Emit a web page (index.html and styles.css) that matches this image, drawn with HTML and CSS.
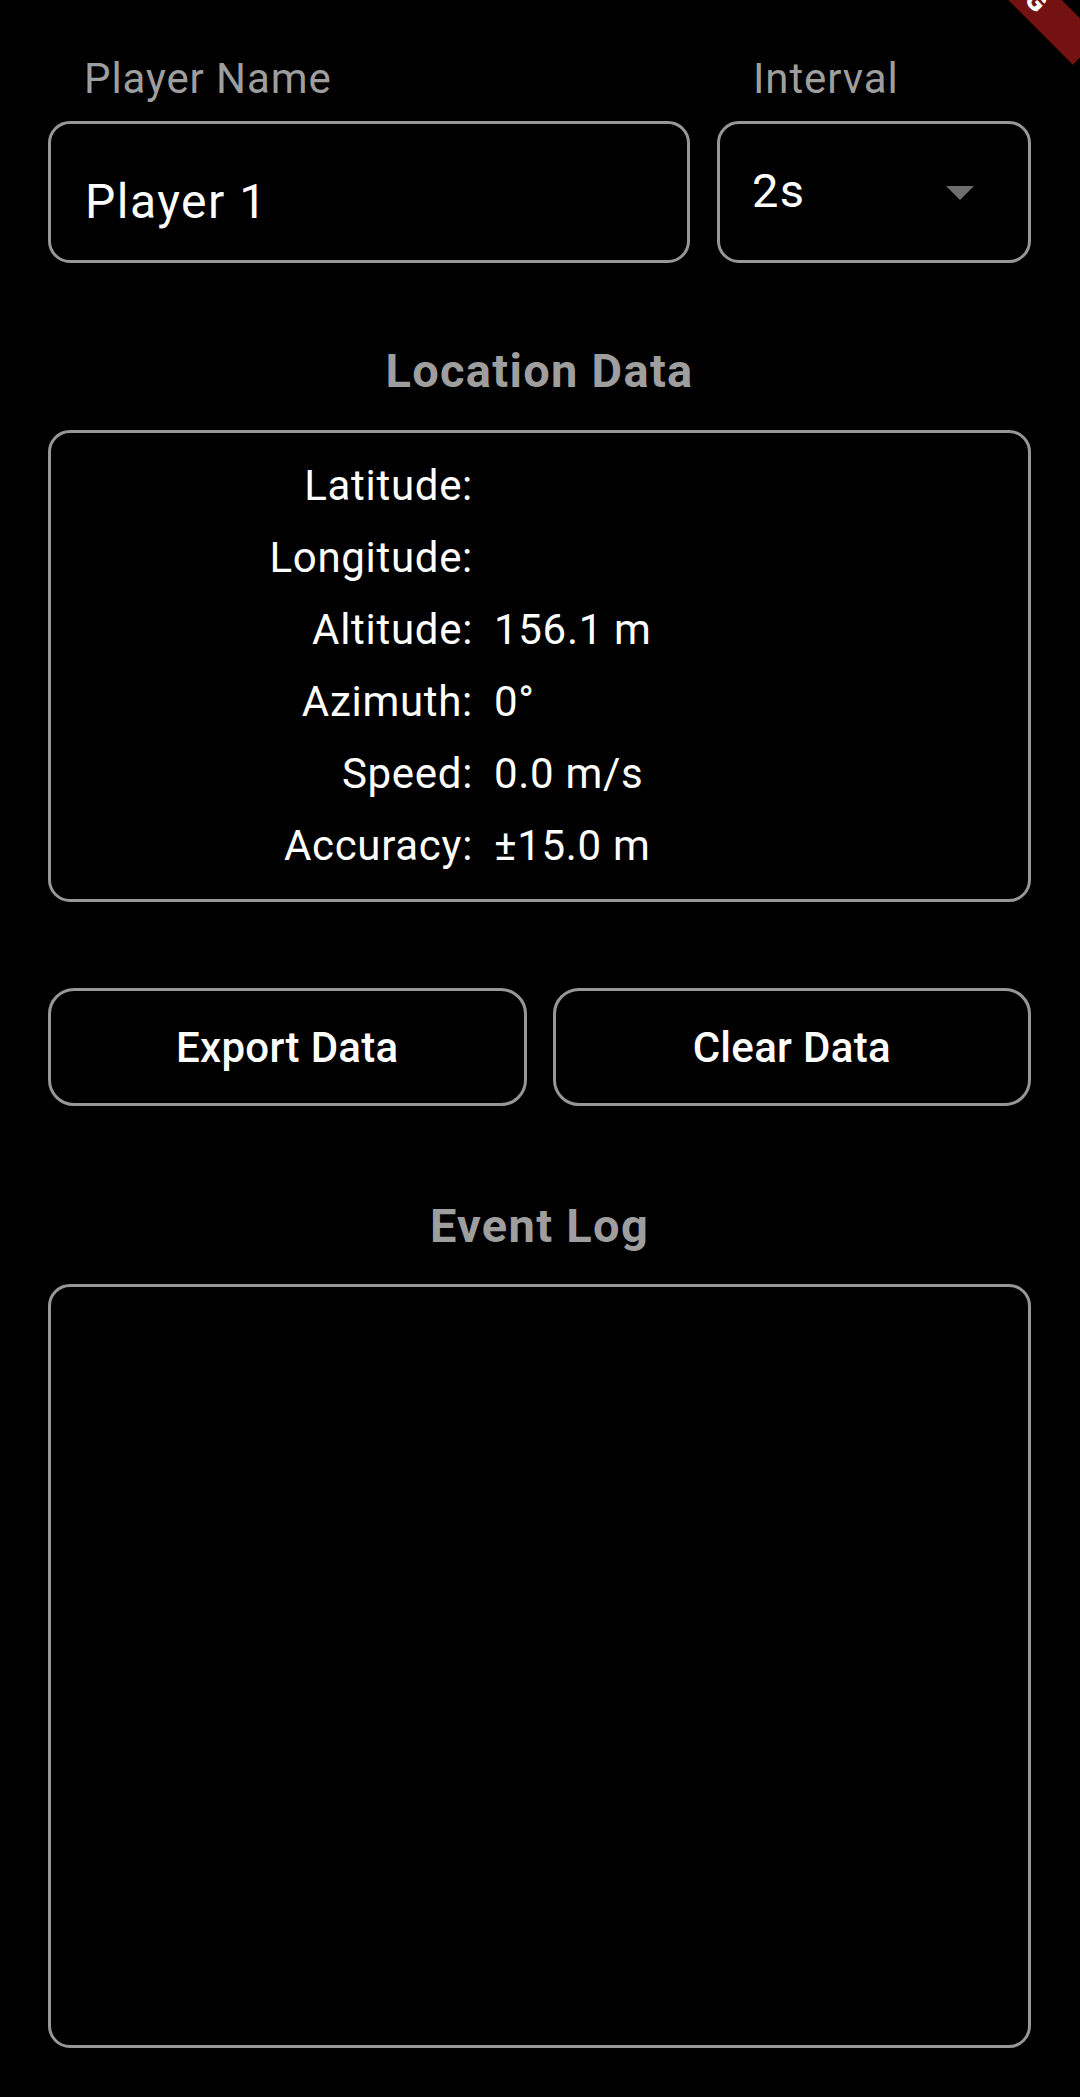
FILE: index.html
```html
<!DOCTYPE html>
<html lang="en">
<head>
<meta charset="utf-8">
<title>Location Tracker</title>
<link rel="stylesheet" href="styles.css">
</head>
<body>
<div class="screen">
  <div class="top-row">
    <div class="field">
      <div class="field-label">Player Name</div>
      <div class="input-box"><span class="input-text">Player 1</span></div>
    </div>
    <div class="field">
      <div class="field-label">Interval</div>
      <div class="select-box">
        <span class="select-text">2s</span>
        <svg class="drop-icon" viewBox="0 0 28 14" width="28" height="14" aria-hidden="true"><path d="M0 0 L28 0 L14 14 Z"/></svg>
      </div>
    </div>
  </div>

  <div class="section-title title-location">Location Data</div>
  <div class="data-card">
    <div class="data-grid">
      <div class="data-label">Latitude:</div><div class="data-value"></div>
      <div class="data-label">Longitude:</div><div class="data-value"></div>
      <div class="data-label">Altitude:</div><div class="data-value">156.1 m</div>
      <div class="data-label">Azimuth:</div><div class="data-value">0°</div>
      <div class="data-label">Speed:</div><div class="data-value">0.0 m/s</div>
      <div class="data-label">Accuracy:</div><div class="data-value">±15.0 m</div>
    </div>
  </div>

  <div class="actions">
    <button class="outline-btn" type="button">Export Data</button>
    <button class="outline-btn" type="button">Clear Data</button>
  </div>

  <div class="section-title title-log">Event Log</div>
  <div class="log-box"></div>

  <div class="debug-banner"><span>DEBUG</span></div>
</div>
</body>
</html>
```

FILE: styles.css
```css
html, body {
  margin: 0;
  padding: 0;
  background: #000;
  overflow: hidden;
}

.screen {
  position: relative;
  box-sizing: border-box;
  width: 1080px;
  height: 2097px;
  overflow: hidden;
  padding: 54px 49px 0 48px;
  font-family: Roboto, "Noto Sans", sans-serif;
  color: #fff;
}

.top-row {
  display: grid;
  grid-template-columns: 642fr 314fr;
  column-gap: 27px;
}

.field-label {
  font-size: 42px;
  line-height: 50px;
  letter-spacing: 0.9px;
  color: #9e9e9e;
  padding-left: 36px;
  margin-bottom: 17px;
}

.input-box,
.select-box {
  box-sizing: border-box;
  height: 142px;
  border: 3px solid #979797;
  border-radius: 22px;
}

.input-box {
  padding: 50px 0 0 34px;
}

.input-text,
.select-text {
  font-size: 47px;
  line-height: 56px;
  letter-spacing: 1.3px;
  color: #fff;
}

.input-text {
  display: block;
  font-size: 48px;
  letter-spacing: 1.5px;
}

.select-box {
  display: flex;
  align-items: center;
  justify-content: space-between;
  padding: 0 54px 0 32px;
}

.select-text {
  margin-top: -3px;
}

.drop-icon {
  display: block;
  fill: #6e6e6e;
  margin-top: 2px;
}

.section-title {
  font-size: 47px;
  font-weight: 700;
  line-height: 56px;
  letter-spacing: 1.3px;
  color: #9e9e9e;
  text-align: center;
}

.title-location {
  margin: 80px 0 31px;
}

.title-log {
  margin: 92px 0 30px;
}

.data-card {
  box-sizing: border-box;
  border: 3px solid #979797;
  border-radius: 22px;
  padding: 17px 0;
}

.data-grid {
  display: grid;
  grid-template-columns: 422px 1fr;
  font-size: 42px;
  line-height: 72px;
  letter-spacing: 0.7px;
}

.data-label {
  text-align: right;
  height: 72px;
}

.data-value {
  padding-left: 21px;
  height: 72px;
}

.actions {
  display: grid;
  grid-template-columns: 1fr 1fr;
  column-gap: 26px;
  margin-top: 86px;
}

.outline-btn {
  box-sizing: border-box;
  height: 118px;
  margin: 0;
  padding: 0;
  background: transparent;
  border: 3px solid #979797;
  border-radius: 26px;
  color: #fff;
  font-family: Roboto, "Noto Sans", sans-serif;
  font-size: 42px;
  font-weight: 500;
  letter-spacing: 0.3px;
}

.log-box {
  box-sizing: border-box;
  height: 764px;
  border: 3px solid #979797;
  border-radius: 22px;
}

.debug-banner {
  position: absolute;
  left: 907px;
  top: -42px;
  width: 210px;
  height: 38px;
  background: rgba(183, 28, 28, 0.63);
  transform: rotate(45deg);
  text-align: center;
  color: #fff;
  font-family: Roboto, sans-serif;
  font-size: 27px;
  font-weight: 900;
  line-height: 38px;
}
```
